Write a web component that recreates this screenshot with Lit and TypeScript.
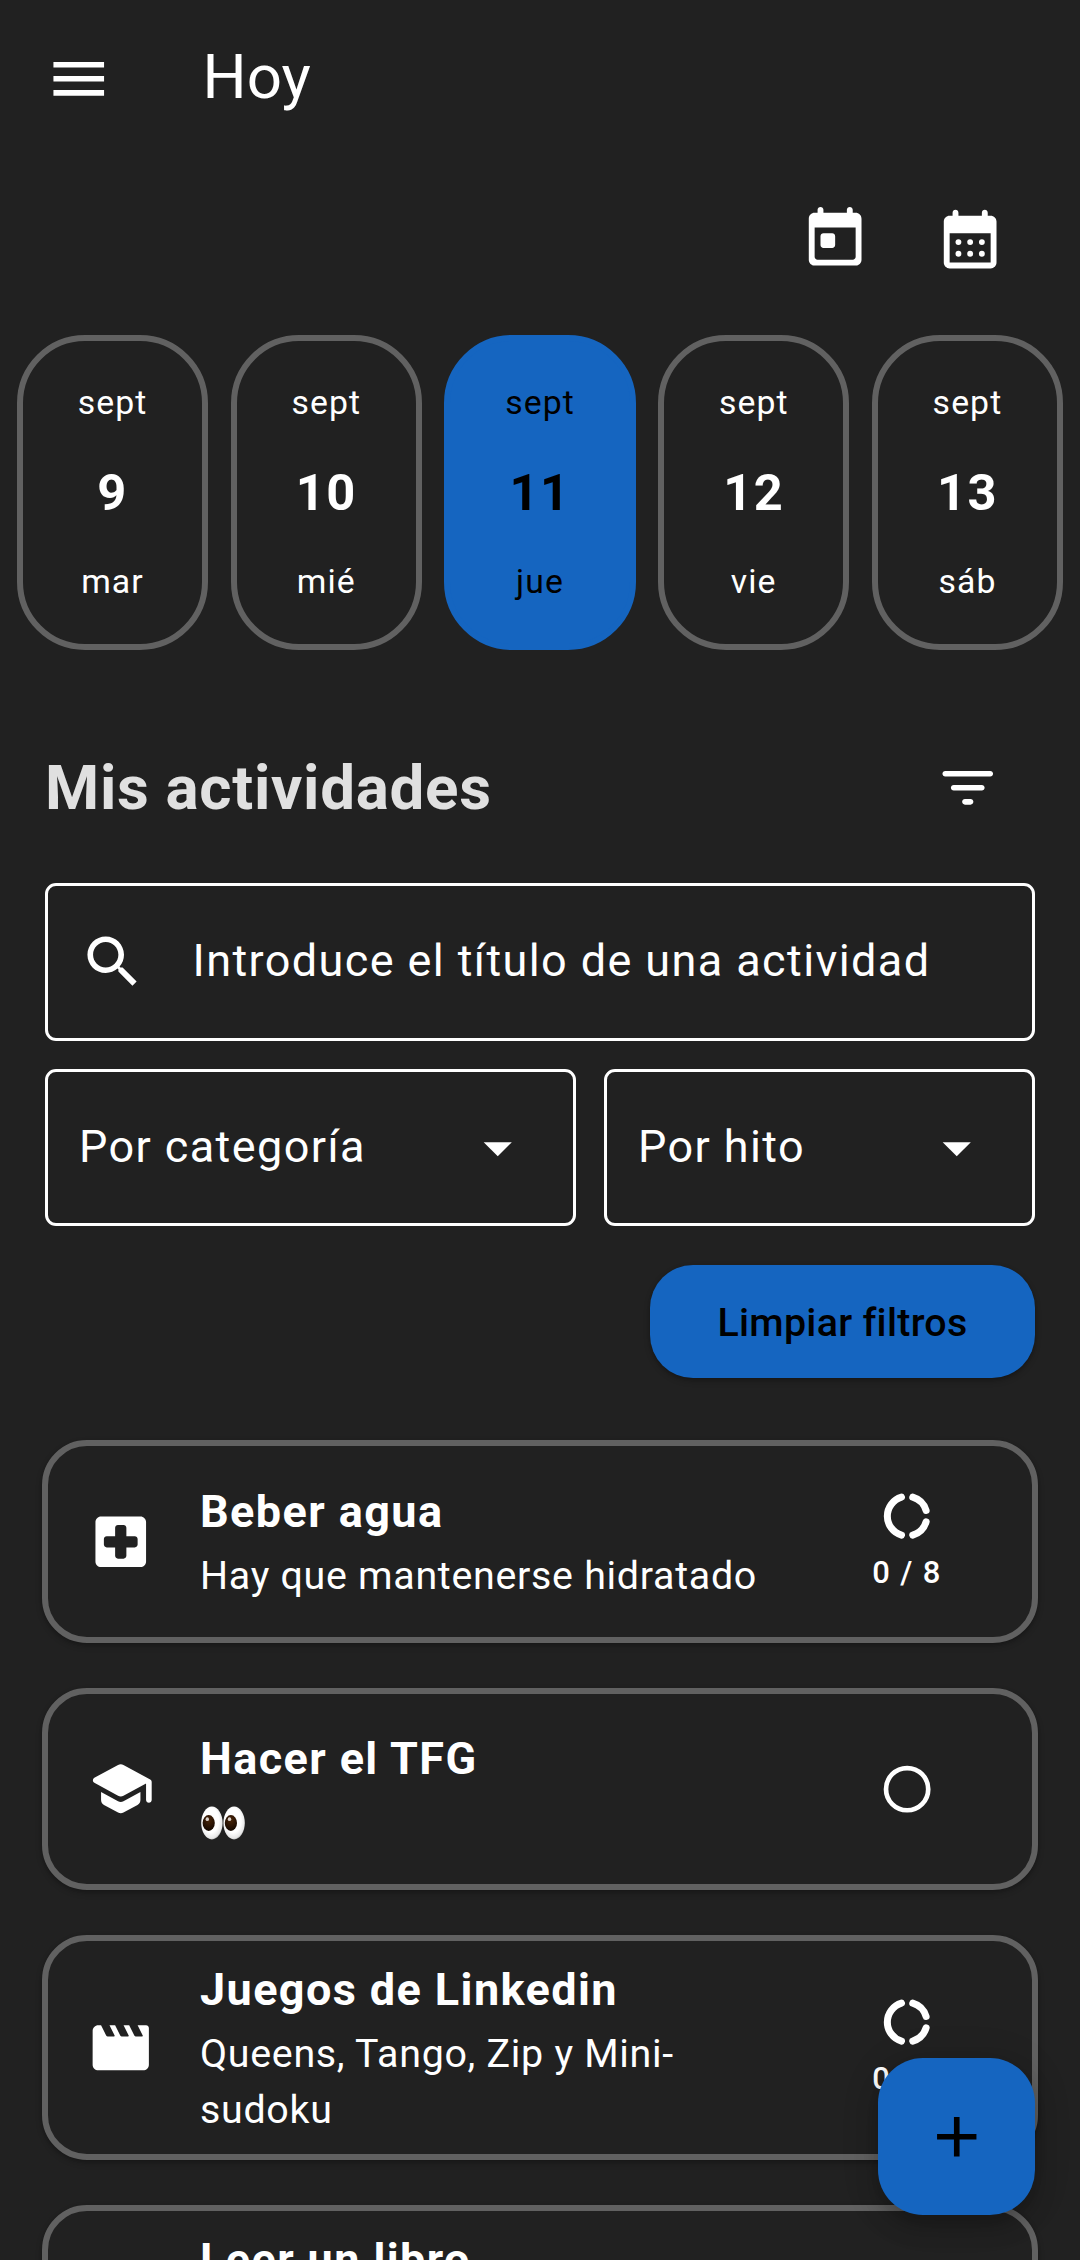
import { LitElement, html, css, svg, nothing, TemplateResult, SVGTemplateResult } from "lit";
import { customElement, property, state } from "lit/decorators.js";
import { classMap } from "lit/directives/class-map.js";

type IconName =
  | "menu" | "today" | "month" | "filter" | "search" | "drop"
  | "hospital" | "school" | "movie" | "book" | "donut" | "circle" | "add";

const ICONS: Record<IconName, SVGTemplateResult> = {
  menu: svg`<path d="M3 18h18v-2H3v2zm0-5h18v-2H3v2zm0-7v2h18V6H3z"/>`,
  today: svg`<path d="M19 3h-1V2c0-.55-.45-1-1-1s-1 .45-1 1v1H8V2c0-.55-.45-1-1-1s-1 .45-1 1v1H5c-1.11 0-2 .9-2 2v14c0 1.1.89 2 2 2h14c1.1 0 2-.9 2-2V5c0-1.1-.9-2-2-2zm-1 16H6c-.55 0-1-.45-1-1V8h14v10c0 .55-.45 1-1 1zM8 10h3c.55 0 1 .45 1 1v3c0 .55-.45 1-1 1H8c-.55 0-1-.45-1-1v-3c0-.55.45-1 1-1z"/>`,
  month: svg`<path d="M19 4h-1V3c0-.55-.45-1-1-1s-1 .45-1 1v1H8V3c0-.55-.45-1-1-1s-1 .45-1 1v1H5c-1.11 0-2 .9-2 2v14c0 1.1.89 2 2 2h14c1.1 0 2-.9 2-2V6c0-1.1-.9-2-2-2zm0 16H5V10h14v10z"/><circle cx="8" cy="13" r="1"/><circle cx="12" cy="13" r="1"/><circle cx="16" cy="13" r="1"/><circle cx="8" cy="17" r="1"/><circle cx="12" cy="17" r="1"/><circle cx="16" cy="17" r="1"/>`,
  filter: svg`<path d="M11 18h2c.55 0 1-.45 1-1s-.45-1-1-1h-2c-.55 0-1 .45-1 1s.45 1 1 1zM3 7c0 .55.45 1 1 1h16c.55 0 1-.45 1-1s-.45-1-1-1H4c-.55 0-1 .45-1 1zm4 6h10c.55 0 1-.45 1-1s-.45-1-1-1H7c-.55 0-1 .45-1 1s.45 1 1 1z"/>`,
  search: svg`<path d="M15.5 14h-.79l-.28-.27C15.41 12.59 16 11.11 16 9.5 16 5.91 13.09 3 9.5 3S3 5.91 3 9.5 5.91 16 9.5 16c1.61 0 3.09-.59 4.23-1.57l.27.28v.79l5 4.99L20.49 19l-4.99-5zm-6 0C7.01 14 5 11.99 5 9.5S7.01 5 9.5 5 14 7.01 14 9.5 11.99 14 9.5 14z"/>`,
  drop: svg`<path d="M7 10l5 5 5-5z"/>`,
  hospital: svg`<path d="M19 3H5c-1.1 0-1.99.9-1.99 2L3 19c0 1.1.9 2 2 2h14c1.1 0 2-.9 2-2V5c0-1.1-.9-2-2-2zm-2 11h-3v3c0 .55-.45 1-1 1h-2c-.55 0-1-.45-1-1v-3H7c-.55 0-1-.45-1-1v-2c0-.55.45-1 1-1h3V7c0-.55.45-1 1-1h2c.55 0 1 .45 1 1v3h3c.55 0 1 .45 1 1v2c0 .55-.45 1-1 1z"/>`,
  school: svg`<path d="M5 13.18v2.81c0 .73.4 1.41 1.04 1.76l5 2.73c.6.33 1.32.33 1.92 0l5-2.73c.64-.35 1.04-1.03 1.04-1.76v-2.81l-6.04 3.3c-.6.33-1.32.33-1.92 0L5 13.18zm6.04-9.66l-8.43 4.6c-.69.38-.69 1.38 0 1.76l8.43 4.6c.6.33 1.32.33 1.92 0L21 10.09V16c0 .55.45 1 1 1s1-.45 1-1V9.59c0-.37-.2-.7-.52-.88l-9.52-5.19c-.6-.32-1.32-.32-1.92 0z"/>`,
  movie: svg`<path d="M18 4l1.82 3.64c.08.16-.04.36-.22.36h-1.98c-.38 0-.73-.21-.89-.55L15 4h-2l1.82 3.64c.08.16-.04.36-.22.36h-1.98c-.38 0-.73-.21-.89-.55L10 4H8l1.82 3.64c.08.16-.04.36-.22.36H7.62c-.38 0-.73-.21-.9-.55L5 4H4c-1.1 0-1.99.9-1.99 2L2 18c0 1.1.9 2 2 2h16c1.1 0 2-.9 2-2V5c0-.55-.45-1-1-1h-3z"/>`,
  book: svg`<path d="M18 2H6c-1.1 0-2 .9-2 2v16c0 1.1.9 2 2 2h12c1.1 0 2-.9 2-2V4c0-1.1-.9-2-2-2zM6 4h5v8l-2.5-1.5L6 12V4z"/>`,
  donut: svg`<g fill="none" stroke="currentColor" stroke-width="3" stroke-linecap="round"><path d="M9.6 3.9A8.45 8.45 0 0 0 9.6 20.1"/><path d="M14.4 3.9A8.45 8.45 0 0 1 20.1 9.6"/><path d="M20.1 14.4A8.45 8.45 0 0 1 14.4 20.1"/></g>`,
  circle: svg`<circle cx="12" cy="12" r="9" fill="none" stroke="currentColor" stroke-width="2"/>`,
  add: svg`<path d="M19 13h-6v6h-2v-6H5v-2h6V5h2v6h6v2z"/>`,
};

@customElement("ui-icon")
export class UiIcon extends LitElement {
  static styles = css`
    :host { display: block; flex: none; width: 67.5px; height: 67.5px; }
    .glyph { display: block; width: 100%; height: 100%; fill: currentColor; }
  `;
  @property() name: IconName = "menu";
  render() {
    return html`<svg class="glyph" viewBox="0 0 24 24">${ICONS[this.name]}</svg>`;
  }
}

@customElement("eyes-emoji")
export class EyesEmoji extends LitElement {
  static styles = css`
    :host { display: block; height: 56.25px; padding: 11px 0 0 1px; box-sizing: border-box; }
    .eyes { display: block; width: 44px; height: 34px; }
  `;
  render() {
    const eye = (x: number) => svg`
      <ellipse cx=${x} cy="17" rx="10.7" ry="16.4" fill="url(#white)"/>
      <ellipse cx=${x - 3.2} cy="17" rx="6.1" ry="7.9" fill="url(#iris)"/>
      <ellipse cx=${x - 4.6} cy="13.2" rx="1.7" ry="1.9" fill="#d8cfc8"/>`;
    return html`<svg class="eyes" viewBox="0 0 44 34" role="img" aria-label="👀">
      <defs>
        <radialGradient id="white" cx=".45" cy=".42" r=".62">
          <stop offset=".6" stop-color="#fff"/><stop offset=".88" stop-color="#e6e6e6"/><stop offset="1" stop-color="#9c9c9c"/>
        </radialGradient>
        <radialGradient id="iris" cx=".5" cy=".3" r=".7">
          <stop offset="0" stop-color="#4a2508"/><stop offset="1" stop-color="#140800"/>
        </radialGradient>
      </defs>
      ${eye(10.9)}${eye(33.1)}
    </svg>`;
  }
}

interface Day { month: string; num: number; weekday: string; }

interface Activity {
  icon: IconName;
  title: string;
  note: string | TemplateResult;
  progress?: string;
}

@customElement("activity-card")
export class ActivityCard extends LitElement {
  static styles = css`
    :host {
      display: flex; align-items: center; box-sizing: border-box;
      min-height: 202.5px; padding: 15.75px 80px 15.75px 39px;
      border: 6px solid #616161; border-radius: 45px; background: #212121;
      box-shadow: 0 3px 6px rgba(0, 0, 0, 0.24), 0 1px 3px rgba(0, 0, 0, 0.14);
    }
    .body { flex: 1; min-width: 0; margin-left: 45.5px; margin-right: 60px; padding-top: 1px; }
    .title { font-size: 45px; line-height: 64px; font-weight: 700; letter-spacing: 1.4px; white-space: nowrap; }
    .note { margin-top: 4px; font-size: 39.4px; line-height: 56.25px; letter-spacing: 0.7px; }
    .status { flex: none; width: 90px; display: flex; flex-direction: column; align-items: center; gap: 5.6px; }
    .mark { width: 56.25px; height: 56.25px; }
    .count { font-size: 30.94px; line-height: 45px; font-weight: 500; letter-spacing: 1.4px; white-space: nowrap; }
  `;
  @property({ attribute: false }) activity!: Activity;
  render() {
    const a = this.activity;
    return html`
      <ui-icon .name=${a.icon}></ui-icon>
      <div class="body">
        <div class="title">${a.title}</div>
        <div class="note">${a.note}</div>
      </div>
      <div class="status">
        <ui-icon class="mark" .name=${a.progress ? "donut" : "circle"}></ui-icon>
        ${a.progress ? html`<span class="count">${a.progress}</span>` : nothing}
      </div>`;
  }
}

@customElement("app-root")
export class AppRoot extends LitElement {
  static styles = css`
    :host {
      display: block; position: relative; box-sizing: border-box;
      width: 1080px; height: 2260px; overflow: hidden;
      background: #212121; color: #fff;
      font-family: Roboto, "Liberation Sans", sans-serif;
    }
    .bar { display: flex; align-items: center; height: 157.5px; padding-left: 45px; gap: 90px; box-sizing: border-box; }
    .heading { font-size: 61.9px; line-height: 80px; padding-bottom: 4px; }
    .tools { display: flex; justify-content: flex-end; gap: 64.5px; padding: 46px 74.5px 0 0; }
    .tool { width: 70.3px; height: 70.3px; }
    .days { display: grid; grid-template-columns: repeat(5, 1fr); gap: 22.5px; padding: 61px 16.9px 0; }
    .day {
      display: flex; flex-direction: column; align-items: center; justify-content: space-between;
      height: 315px; box-sizing: border-box; padding: 38px 0;
      border: 6px solid #616161; border-radius: 68px;
      font-size: 33.75px; line-height: 48px; letter-spacing: 1.1px;
    }
    .day.selected { background: #1565c0; border-color: #1565c0; color: #000; }
    .num { font-size: 50.6px; line-height: 67px; font-weight: 700; letter-spacing: 1.4px; }
    .section { display: flex; align-items: center; justify-content: space-between; height: 135px; margin-top: 70px; padding: 0 79px 0 45px; }
    .subheading { font-size: 61.9px; line-height: 80px; font-weight: 700; color: #e0e0e0; letter-spacing: 0.7px; padding-top: 1px; }
    .filters { display: grid; grid-template-columns: 531px 1fr; gap: 28px; padding: 28.5px 45px 0; }
    .field {
      display: flex; align-items: center; justify-content: space-between; box-sizing: border-box;
      height: 157.5px; padding: 0 42px 0 31px;
      border: 3px solid #fff; border-radius: 11px;
      font-size: 45px; letter-spacing: 1.4px; white-space: nowrap;
    }
    .field.wide { grid-column: 1 / -1; justify-content: flex-start; gap: 46px; }
    .label { line-height: 60px; padding-bottom: 2px; }
    .actions { display: flex; justify-content: flex-end; padding: 39px 45px 0; }
    .clear {
      width: 385px; height: 112.5px; border: 0; border-radius: 43px; padding: 2px 0 0;
      background: #1565c0; color: #000; font: 500 39.4px/56px Roboto, sans-serif; letter-spacing: 0.28px;
      box-shadow: 0 3px 6px rgba(0, 0, 0, 0.24), 0 1px 3px rgba(0, 0, 0, 0.14);
    }
    .list { display: flex; flex-direction: column; gap: 45px; padding: 62.5px 42px 0; }
    .fab {
      position: absolute; right: 45px; bottom: 45px; width: 157.5px; height: 157.5px;
      display: flex; align-items: center; justify-content: center; padding: 0;
      border: 0; border-radius: 45px; background: #1565c0; color: #000;
      box-shadow: 0 11px 22px rgba(0, 0, 0, 0.24), 0 3px 40px rgba(0, 0, 0, 0.1);
    }
  `;

  @state() private selected = 11;

  private days: Day[] = [
    { month: "sept", num: 9, weekday: "mar" },
    { month: "sept", num: 10, weekday: "mié" },
    { month: "sept", num: 11, weekday: "jue" },
    { month: "sept", num: 12, weekday: "vie" },
    { month: "sept", num: 13, weekday: "sáb" },
  ];

  private activities: Activity[] = [
    { icon: "hospital", title: "Beber agua", note: "Hay que mantenerse hidratado", progress: "0 / 8" },
    { icon: "school", title: "Hacer el TFG", note: html`<eyes-emoji></eyes-emoji>` },
    { icon: "movie", title: "Juegos de Linkedin", note: html`Queens, Tango, Zip y Mini-<br>sudoku`, progress: "0 / 4" },
    { icon: "book", title: "Leer un libro", note: html`<br><br>` },
  ];

  render() {
    return html`
      <header class="bar">
        <ui-icon name="menu"></ui-icon>
        <span class="heading">Hoy</span>
      </header>
      <nav class="tools">
        <ui-icon class="tool" name="today"></ui-icon>
        <ui-icon class="tool" name="month"></ui-icon>
      </nav>
      <div class="days">
        ${this.days.map((d) => html`
          <div class=${classMap({ day: true, selected: d.num === this.selected })}
               @click=${() => (this.selected = d.num)}>
            <span>${d.month}</span>
            <span class="num">${d.num}</span>
            <span>${d.weekday}</span>
          </div>`)}
      </div>
      <div class="section">
        <span class="subheading">Mis actividades</span>
        <ui-icon name="filter"></ui-icon>
      </div>
      <div class="filters">
        <div class="field wide"><ui-icon name="search"></ui-icon><span class="label">Introduce el título de una actividad</span></div>
        <div class="field"><span class="label">Por categoría</span><ui-icon name="drop"></ui-icon></div>
        <div class="field"><span class="label">Por hito</span><ui-icon name="drop"></ui-icon></div>
      </div>
      <div class="actions"><button class="clear">Limpiar filtros</button></div>
      <main class="list">
        ${this.activities.map((a) => html`<activity-card .activity=${a}></activity-card>`)}
      </main>
      <button class="fab"><ui-icon name="add"></ui-icon></button>
    `;
  }
}
